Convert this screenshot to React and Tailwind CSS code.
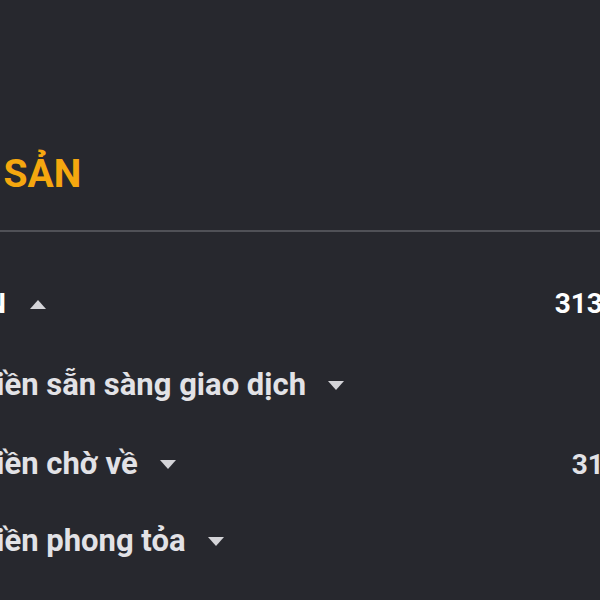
import React from 'react';

const Caret = ({ up }) => (
  <svg width="16" height="9" viewBox="0 0 16 9" className="shrink-0">
    {up ? <path d="M0 9 L8 0 L16 9 Z" fill="#d4d4d8" /> : <path d="M0 0 L16 0 L8 9 Z" fill="#d4d4d8" />}
  </svg>
);

const rows = [
  { label: 'Tiền sẵn sàng giao dịch', value: '' },
  { label: 'Tiền chờ về', value: '31,500,000' },
  { label: 'Tiền phong tỏa', value: '' },
];

export default function App() {
  return (
    <div className="w-[600px] h-[600px] overflow-hidden bg-[#27282e] font-['Roboto',sans-serif]">
      <div className="pt-[151px]">
        <div className="ml-[-66px] h-[46px] leading-[46px] text-[39px] font-bold text-[#f5a70f] whitespace-nowrap">TÀI SẢN</div>
        <div className="mt-[33px] h-[2px] bg-[#505157]"></div>
        <div className="h-[80px] mt-[32px] flex items-center justify-between text-white">
          <div className="ml-[-55px] flex items-center gap-[24px] whitespace-nowrap">
            <span className="text-[28px] font-bold">TIỀN</span>
            <Caret up />
          </div>
          <span className="mr-[-113px] text-[28px] font-bold whitespace-nowrap">313,600,000</span>
        </div>
        {rows.map((r, i) => (
          <div key={r.label} className={`${i === 0 ? 'h-[82px]' : 'h-[77px]'} flex items-center justify-between text-[#e2e2e6]`}>
            <div className="ml-[-23px] flex items-center gap-[22px] whitespace-nowrap">
              <span className="text-[31px] font-bold">{r.label}</span>
              <Caret />
            </div>
            <span className="mr-[-114px] text-[28px] font-bold whitespace-nowrap">{r.value}</span>
          </div>
        ))}
      </div>
    </div>
  );
}
